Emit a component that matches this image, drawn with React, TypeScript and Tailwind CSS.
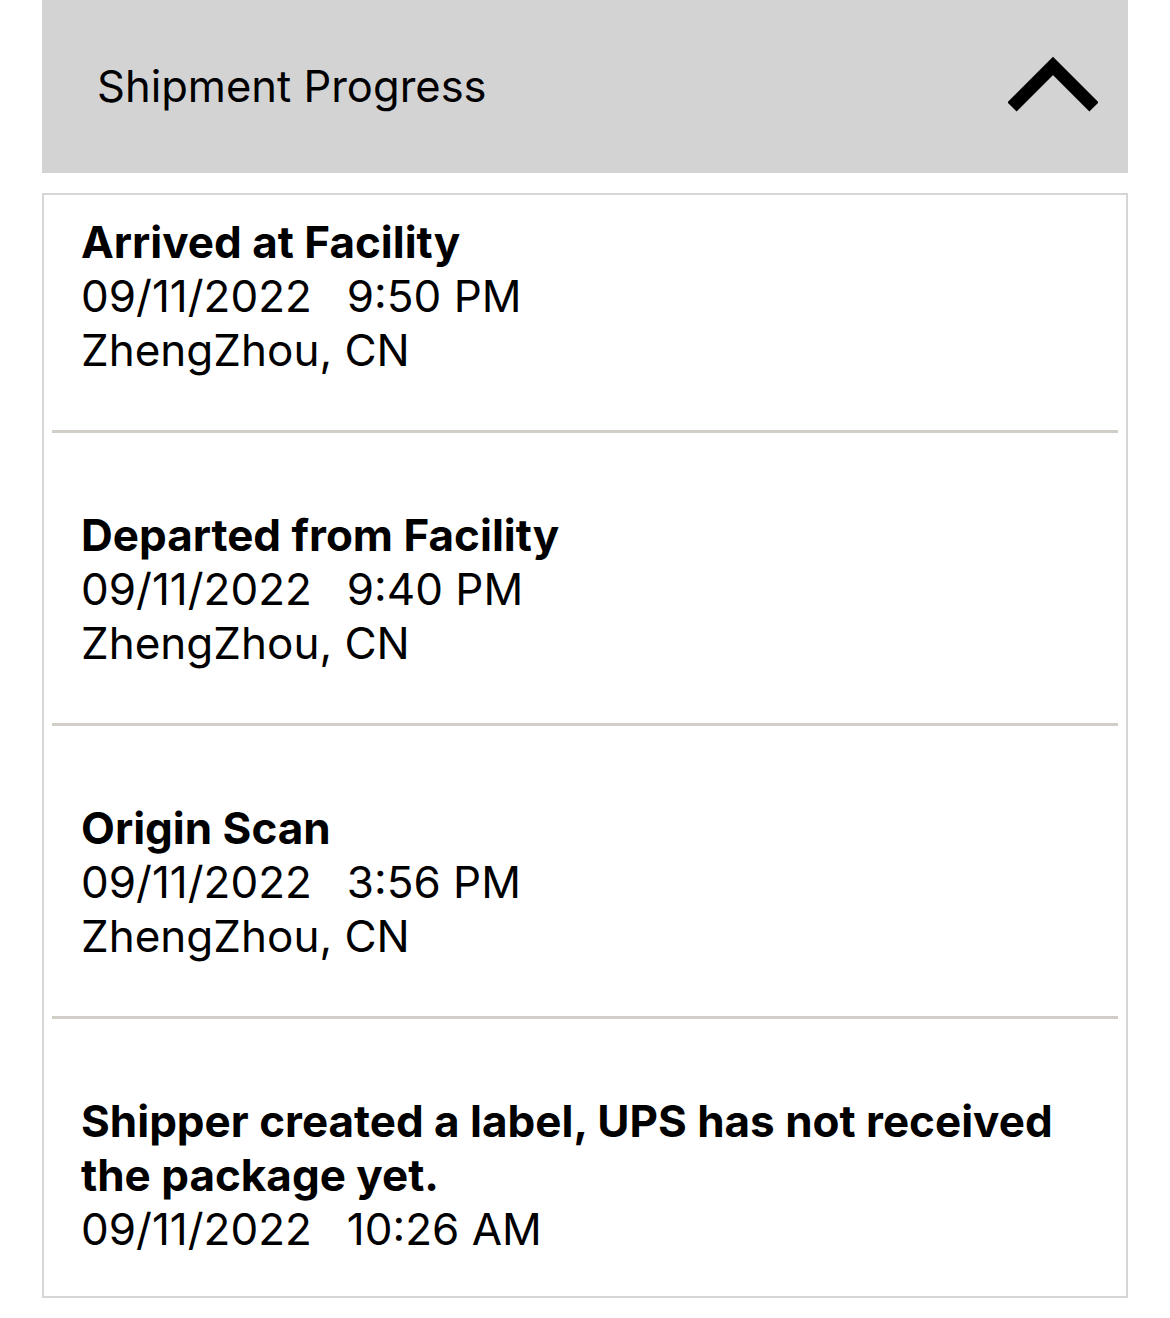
import React from "react";

const items = [
  { title: ["Arrived at Facility"], date: "09/11/2022", time: "9:50 PM", place: "ZhengZhou, CN" },
  { title: ["Departed from Facility"], date: "09/11/2022", time: "9:40 PM", place: "ZhengZhou, CN" },
  { title: ["Origin Scan"], date: "09/11/2022", time: "3:56 PM", place: "ZhengZhou, CN" },
  {
    title: ["Shipper created a label, UPS has not received", "the package yet."],
    date: "09/11/2022",
    time: "10:26 AM",
    place: "",
  },
];

export default function App() {
  return (
    <div
      className="w-[1170px] h-[1318px] bg-white px-[42px] text-black"
      style={{ fontFamily: "Inter, 'Noto Sans', sans-serif" }}
    >
      <div className="h-[173px] bg-[#d3d3d3] flex items-center justify-between pl-[55px] pr-[30px]">
        <span className="text-[43.5px] leading-none font-normal">Shipment Progress</span>
        <svg width="90" height="60" viewBox="0 0 90 60" className="-mt-[6px]">
          <polyline points="4,53 45,12 86,53" fill="none" stroke="#000" strokeWidth="13" strokeLinejoin="miter" strokeLinecap="butt" />
        </svg>
      </div>
      <div className="mt-[20px] border-2 border-[#d6d6d6] h-[1105px] flex flex-col">
        {items.map((it, i) => (
          <div key={i} className="flex flex-col">
            {i > 0 && <div className="mx-[8px] h-[3px] bg-[#d1cec8]" />}
            <div className={`pl-[37px] text-[44px] leading-[54px] ${i === 0 ? "pt-[20px] pb-[53px]" : "pt-[75px] pb-[53px]"}`}>
              {it.title.map((t, j) => (
                <div key={j} className="font-bold">{t}</div>
              ))}
              <div>
                <span>{it.date}</span>
                <span className="ml-[35px]">{it.time}</span>
              </div>
              {it.place && <div>{it.place}</div>}
            </div>
          </div>
        ))}
      </div>
    </div>
  );
}
